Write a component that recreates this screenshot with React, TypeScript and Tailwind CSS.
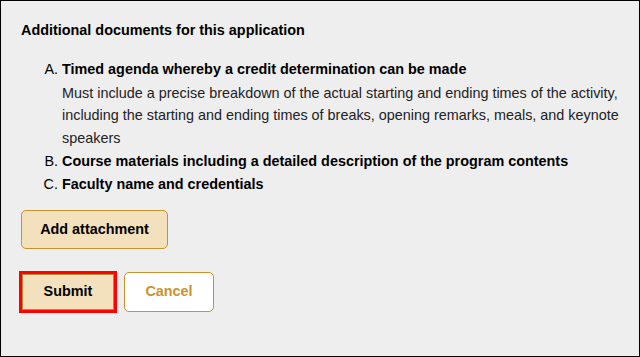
export default function App() {
  return (
    <div
      className="w-[640px] h-[357px] bg-[#eeeeee] border border-black text-[14.4px] leading-[22.8px] text-black overflow-hidden"
      style={{ fontFamily: '"Liberation Sans", Arial, sans-serif' }}
    >
      <div className="pl-[20px] pr-[18px] pt-[18px]">
        <h2 className="font-bold">Additional documents for this application</h2>

        <ol className="list-[upper-alpha] pl-[41px] mt-[16px]">
          <li>
            <span className="font-bold">Timed agenda whereby a credit determination can be made</span>
            <div className="text-[#222222] mt-[1px]">
              Must include a precise breakdown of the actual starting and ending times of the activity,
              including the starting and ending times of breaks, opening remarks, meals, and keynote
              speakers
            </div>
          </li>
          <li>
            <span className="font-bold">Course materials including a detailed description of the program contents</span>
          </li>
          <li>
            <span className="font-bold">Faculty name and credentials</span>
          </li>
        </ol>

        <button className="mt-[14px] w-[147px] h-[39px] rounded-[5px] border border-[#c9922c] bg-[#f3e0bd] font-bold text-black">
          Add attachment
        </button>

        <div className="flex items-center gap-[10px] mt-[23px]">
          <button className="ml-[1px] w-[92px] h-[36px] border border-[#b98a3a] bg-[#f3e0bd] font-bold text-black outline-[3px] outline-solid outline-[#ff0000]">
            Submit
          </button>
          <button className="w-[90px] h-[40px] rounded-[5px] border border-[#c9922c] bg-white font-bold text-[#c9922c]">
            Cancel
          </button>
        </div>
      </div>
    </div>
  )
}
